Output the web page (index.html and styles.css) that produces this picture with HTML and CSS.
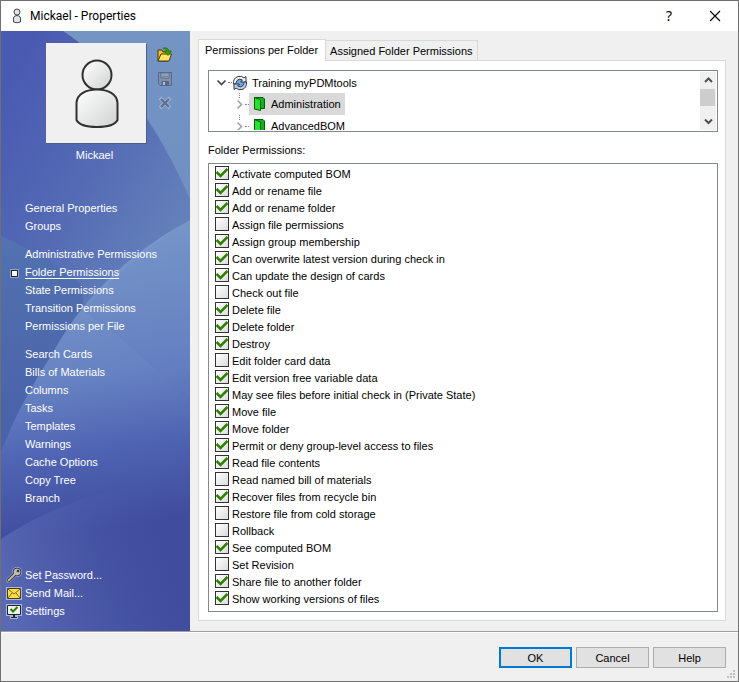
FILE: index.html
```html
<!DOCTYPE html>
<html lang="en">
<head>
<meta charset="utf-8">
<title>Mickael - Properties</title>
<link rel="stylesheet" href="styles.css">
</head>
<body>
<div class="window">
  <header class="titlebar">
    <svg class="title-icon" width="16" height="16" viewBox="0 0 16 16"><g fill="#e4e4e4" stroke="#444" stroke-width="1"><circle cx="8" cy="4" r="3"/><path d="M4.500 14V10Q5 7.500 8 7.500T11.500 10V14Q8 15.500 4.500 14Z"/></g></svg>
    <h1 class="title">Mickael - Properties</h1>
    <button class="caption-button" type="button" aria-label="Context help">?</button>
    <button class="caption-button" type="button" aria-label="Close"><svg width="12" height="12" viewBox="0 0 12 12"><path d="M1 1L11 11M11 1L1 11" stroke="#000" stroke-width="1.100"/></svg></button>
  </header>
  <div class="main">
    <aside class="sidebar">
      <svg class="sidebar-art" viewBox="0 0 189 600" preserveAspectRatio="none" aria-hidden="true">
        <defs>
          <linearGradient id="sky" x1="0" y1="0" x2="0" y2="1"><stop offset="0" stop-color="#7494c4"/><stop offset="1" stop-color="#6686be"/></linearGradient>
          <linearGradient id="upper" gradientUnits="userSpaceOnUse" x1="0" y1="60" x2="190" y2="170"><stop offset="0" stop-color="#4a5ab2"/><stop offset=".5" stop-color="#536ab4"/><stop offset="1" stop-color="#6480ba"/></linearGradient>
          <linearGradient id="shade" x1="0" y1="0" x2="0" y2="1"><stop offset="0" stop-color="#5272b0"/><stop offset="1" stop-color="#4860a8"/></linearGradient>
          <linearGradient id="dome" gradientUnits="userSpaceOnUse" x1="110" y1="189" x2="160" y2="490"><stop offset="0" stop-color="#7c9ecc"/><stop offset=".5" stop-color="#6682c2"/><stop offset=".75" stop-color="#4e62b2"/><stop offset="1" stop-color="#404c9e"/></linearGradient>
          <linearGradient id="foot" gradientUnits="userSpaceOnUse" x1="0" y1="560" x2="170" y2="500"><stop offset="0" stop-color="#5a69b4"/><stop offset="1" stop-color="#4656a6" stop-opacity="0"/></linearGradient>
        </defs>
        <rect width="189" height="600" fill="url(#sky)"/>
        <path d="M0 0H62Q136 48 189 168V400H0Z" fill="url(#upper)"/>
        <path d="M0 205Q45 225 82 255V430H0Z" fill="url(#shade)"/>
        <path d="M189 189Q95 240 50 325Q20 370 0 420V600H189Z" fill="url(#dome)"/>
        <path d="M82 280Q135 315 189 374V189Q130 225 82 280Z" fill="#6070bc" fill-opacity=".15"/>
        <path d="M0 508Q70 460 189 443V600H0Z" fill="url(#foot)"/>
      </svg>
      <div class="profile">
        <figure class="card">
          <div class="portrait">
            <svg width="100" height="100" viewBox="0 0 100 100"><defs><linearGradient id="body" x1="0" y1="0" x2="1" y2="1"><stop offset="0" stop-color="#fff"/><stop offset="1" stop-color="#d0d2d1"/></linearGradient></defs><g fill="url(#body)" stroke="#303030" stroke-width="2"><circle cx="51" cy="32" r="14.500"/><path d="M30.500 77V60C31 51 40 46.500 51 46.500S71 51 71.500 60V77C69 82 60 84 51 84S33 82 30.500 77Z"/></g></svg>
          </div>
          <figcaption>Mickael</figcaption>
        </figure>
        <div class="profile-tools">
          <button type="button" class="tool" aria-label="Open picture"><svg width="16" height="16" viewBox="0 0 16 16"><path d="M1 14V3H5L6 5H11V14Z" fill="#f4c51c" stroke="#49390c"/><path d="M1 14L4 7H14.500L12 14Z" fill="#ffe666" stroke="#49390c"/><path d="M6 1Q11 0 12 4H14.500L11 8.500L7.500 4H10Q9 2 6 1Z" fill="#36a000" stroke="#1c6300" stroke-width=".6"/></svg></button>
          <button type="button" class="tool" aria-label="Save picture" disabled><svg width="16" height="16" viewBox="0 0 16 16"><path d="M1.500 1.500H14.500V14.500H3L1.500 13Z" fill="#8090aa" stroke="#56688c"/><path d="M4 2H12V7H4Z" fill="#a8b7ce" stroke="#56688c"/><path d="M5 4H11M5 5.500H11" stroke="#61728f" stroke-width=".7"/><path d="M4.500 10H12V14H4.500Z" fill="#566886"/><path d="M6 11H8V14H6Z" fill="#b0bfd5"/></svg></button>
          <button type="button" class="tool" aria-label="Remove picture" disabled><svg width="16" height="16" viewBox="0 0 16 16"><path d="M3 3L13 13M13 3L3 13" stroke="#9cb2d4" stroke-width="4"/><path d="M4 4L12 12M12 4L4 12" stroke="#5f7088" stroke-width="2.400"/></svg></button>
        </div>
      </div>
      <nav class="nav">
        <div class="nav-group"><a href="#">General Properties</a><a href="#">Groups</a></div>
        <div class="nav-group"><a href="#">Administrative Permissions</a><a href="#" class="current" aria-current="page">Folder Permissions</a><a href="#">State Permissions</a><a href="#">Transition Permissions</a><a href="#">Permissions per File</a></div>
        <div class="nav-group"><a href="#">Search Cards</a><a href="#">Bills of Materials</a><a href="#">Columns</a><a href="#">Tasks</a><a href="#">Templates</a><a href="#">Warnings</a><a href="#">Cache Options</a><a href="#">Copy Tree</a><a href="#">Branch</a></div>
      </nav>
      <div class="actions">
        <a href="#"><svg width="16" height="16" viewBox="0 0 16 16"><path d="M1 15L9 7" stroke="#aebbe8" stroke-width="5"/><circle cx="11" cy="5" r="5" fill="#aebbe8"/><path d="M1.500 14.500L9 7" stroke="#333" stroke-width="4"/><circle cx="11" cy="5" r="4" fill="#bbb" stroke="#333"/><path d="M2 14L9 7" stroke="#bbb" stroke-width="2"/><circle cx="12" cy="4" r="1.300" fill="#333"/></svg><span>Set <u>P</u>assword...</span></a>
        <a href="#"><svg width="16" height="16" viewBox="0 0 16 16"><rect y="2" width="16" height="13" fill="#a9b7e2"/><path d="M1.500 3.500H14.500V13.500H1.500Z" fill="#ffdc49" stroke="#4c3c12"/><path d="M2 4L8 9L14 4M2 13L6 8M14 13L10 8" fill="none" stroke="#806418"/></svg><span>Send Mail...</span></a>
        <a href="#"><svg width="16" height="16" viewBox="0 0 16 16"><path d="M0 1H16V13H12V16H4V13H0Z" fill="#a9b7e2"/><path d="M1.500 2.500H14.500V11.500H1.500Z" fill="#eee" stroke="#222"/><path d="M7 12H9V14H11V15H5V14H7Z" fill="#222"/><path d="M4.500 6L7 8.500L11.500 4" fill="none" stroke="#258000" stroke-width="2"/></svg><span>Settings</span></a>
      </div>
    </aside>
    <main class="content">
      <div class="tabs" role="tablist">
        <button type="button" class="tab selected" role="tab" aria-selected="true">Permissions per Folder</button>
        <button type="button" class="tab" role="tab" aria-selected="false">Assigned Folder Permissions</button>
      </div>
      <section class="panel" role="tabpanel">
        <div class="tree">
          <div class="tree-view" role="tree">
            <div class="node root" role="treeitem" aria-expanded="true"><svg width="11" height="8" viewBox="0 0 11 8"><path d="M1.500 1.500L5.500 5.500L9.500 1.500" fill="none" stroke="#444" stroke-width="1.700"/></svg><i class="dots"></i><svg width="16" height="16" viewBox="0 0 16 16"><circle cx="8" cy="8" r="5.500" fill="#6ea8e4"/><path d="M1.500 9Q1 3 6 1.500Q10 .5 12 3L14 1.500V7H8.500L10.500 5Q7 3 5 5.500Q4 7 4 9Z" fill="#f4f8fc" stroke="#303941"/><path d="M14.500 7Q15 13 10 14.500Q6 15.500 4 13L2 14.500V9H7.500L5.500 11Q9 13 11 10.500Q12 9 12 7Z" fill="#b8d2ea" stroke="#303941"/></svg><span class="node-label">Training myPDMtools</span></div>
            <div class="node child" role="treeitem" aria-selected="true"><i class="branch"></i><svg width="7" height="11" viewBox="0 0 7 11"><path d="M1.500 1.500L5.500 5.500L1.500 9.500" fill="none" stroke="#a4a4a4" stroke-width="1.700"/></svg><i class="dots"></i><span class="node-pick selected"><svg width="16" height="16" viewBox="0 0 16 16"><path d="M3.500 1.500H12L13.500 3V12.500H10L3.500 13Z" fill="#13b01c" stroke="#075e0a"/><path d="M3.500 1.500L9.500 4V14.500L3.500 13Z" fill="#25e331" stroke="#075e0a"/></svg><span class="node-label">Administration</span></span></div>
            <div class="node child" role="treeitem"><i class="branch"></i><svg width="7" height="11" viewBox="0 0 7 11"><path d="M1.500 1.500L5.500 5.500L1.500 9.500" fill="none" stroke="#a4a4a4" stroke-width="1.700"/></svg><i class="dots"></i><span class="node-pick"><svg width="16" height="16" viewBox="0 0 16 16"><path d="M3.500 1.500H12L13.500 3V12.500H10L3.500 13Z" fill="#13b01c" stroke="#075e0a"/><path d="M3.500 1.500L9.500 4V14.500L3.500 13Z" fill="#25e331" stroke="#075e0a"/></svg><span class="node-label">AdvancedBOM</span></span></div>
          </div>
          <div class="scrollbar">
            <button type="button" aria-label="Scroll up"><svg width="9" height="7" viewBox="0 0 9 7"><path d="M1 5L4.500 1.500L8 5" fill="none" stroke="#505050" stroke-width="2"/></svg></button>
            <div class="thumb"></div>
            <button type="button" aria-label="Scroll down"><svg width="9" height="7" viewBox="0 0 9 7"><path d="M1 1.500L4.500 5L8 1.500" fill="none" stroke="#505050" stroke-width="2"/></svg></button>
          </div>
        </div>
        <h2 class="list-title">Folder Permissions:</h2>
        <div class="checklist">
          <label><input type="checkbox" checked>Activate computed BOM</label>
          <label><input type="checkbox" checked>Add or rename file</label>
          <label><input type="checkbox" checked>Add or rename folder</label>
          <label><input type="checkbox">Assign file permissions</label>
          <label><input type="checkbox" checked>Assign group membership</label>
          <label><input type="checkbox" checked>Can overwrite latest version during check in</label>
          <label><input type="checkbox" checked>Can update the design of cards</label>
          <label><input type="checkbox">Check out file</label>
          <label><input type="checkbox" checked>Delete file</label>
          <label><input type="checkbox" checked>Delete folder</label>
          <label><input type="checkbox" checked>Destroy</label>
          <label><input type="checkbox">Edit folder card data</label>
          <label><input type="checkbox" checked>Edit version free variable data</label>
          <label><input type="checkbox" checked>May see files before initial check in (Private State)</label>
          <label><input type="checkbox" checked>Move file</label>
          <label><input type="checkbox" checked>Move folder</label>
          <label><input type="checkbox" checked>Permit or deny group-level access to files</label>
          <label><input type="checkbox" checked>Read file contents</label>
          <label><input type="checkbox">Read named bill of materials</label>
          <label><input type="checkbox" checked>Recover files from recycle bin</label>
          <label><input type="checkbox">Restore file from cold storage</label>
          <label><input type="checkbox">Rollback</label>
          <label><input type="checkbox" checked>See computed BOM</label>
          <label><input type="checkbox">Set Revision</label>
          <label><input type="checkbox" checked>Share file to another folder</label>
          <label><input type="checkbox" checked>Show working versions of files</label>
        </div>
      </section>
    </main>
  </div>
  <footer class="footer">
    <button type="button" class="button default">OK</button>
    <button type="button" class="button">Cancel</button>
    <button type="button" class="button">Help</button>
    <svg class="grip" width="8" height="8" viewBox="0 0 8 8" aria-hidden="true"><path d="M6 0h2v2H6zM3 3h2v2H3zM6 3h2v2H6zM0 6h2v2H0zM3 6h2v2H3zM6 6h2v2H6z" fill="#bfbfbf"/></svg>
  </footer>
</div>
</body>
</html>
```
FILE: styles.css
```css
* { box-sizing: border-box; }
body {
  margin: 0;
  color: #000;
  font: 11px/18px "Liberation Sans", Arial, sans-serif;
}
button { margin: 0; padding: 0; border: 0; background: none; color: inherit; font: inherit; }
svg { display: block; flex: none; }
a { color: inherit; text-decoration: none; }

.window {
  display: flex;
  flex-direction: column;
  min-height: 100vh;
  border: 1px solid #707070;
  background: #f0f0f0;
}
.titlebar { display: flex; align-items: center; height: 30px; padding-left: 8px; background: #fff; }
.title { flex: 1; margin: 0 0 0 5px; font: 12px/18px Roboto, sans-serif; }
.caption-button { display: grid; place-items: center; width: 46px; height: 30px; font: 14px/18px "Noto Sans", sans-serif; }

.main { display: flex; flex: 1; }
.sidebar {
  position: relative;
  isolation: isolate;
  display: flex;
  flex-direction: column;
  flex: none;
  width: 189px;
  color: #fff;
}
.sidebar-art { position: absolute; z-index: -1; inset: 0; width: 100%; height: 100%; }
.profile { display: flex; gap: 11px; padding: 12px 0 0 45px; }
.card { margin: 0; text-align: center; }
.portrait { width: 100px; height: 100px; background: #f0f0f0; box-shadow: 1px 1px #4a5e86; }
.card figcaption { margin: 3px 3px 0 0; }
.profile-tools { display: flex; flex-direction: column; gap: 8px; padding-top: 4px; }
.tool { width: 16px; height: 16px; }
.nav { display: flex; flex-direction: column; gap: 10px; padding: 35px 0 0 24px; }
.nav-group { display: flex; flex-direction: column; align-items: flex-start; }
.nav a { height: 18px; }
.nav .current { position: relative; text-decoration: underline; text-underline-offset: 2px; }
.nav .current::before {
  content: "";
  position: absolute;
  left: -14px;
  top: 7px;
  width: 5px;
  height: 5px;
  border: 1px solid #222;
  outline: 1px solid #8fa4d4;
  background: #fff;
}
.actions { display: flex; flex-direction: column; margin-top: auto; padding: 0 0 11px 5px; }
.actions a { display: flex; align-items: center; gap: 3px; height: 18px; }
.actions u { text-underline-offset: 2px; }

.content { display: flex; flex: 1; flex-direction: column; min-width: 0; padding: 8px 12px 10px 8px; }
.tabs { display: flex; align-items: flex-end; }
.tab {
  height: 20px;
  padding: 0 4px;
  border: 1px solid #d9d9d9;
  border-left: 0;
  border-bottom: 0;
  white-space: nowrap;
}
.tab.selected {
  height: 22px;
  margin-bottom: -1px;
  padding: 0 7px 2px 6px;
  border-left: 1px solid #d9d9d9;
  background: #fff;
  z-index: 1;
}
.panel { display: flex; flex: 1; flex-direction: column; padding: 9px 7px 8px 9px; border: 1px solid #d9d9d9; background: #fff; }
.tree { display: flex; height: 62px; padding: 1px; border: 1px solid #828790; }
.tree-view { flex: 1; overflow: hidden; }
.node { position: relative; display: flex; align-items: center; height: 22px; }
.root { height: 21px; padding-left: 6px; }
.child { padding-left: 26px; }
.root .dots { width: 4px; margin: 0 0 0 1px; }
.dots { width: 4px; margin-left: 2px; border-top: 1px dotted #888; }
.branch { position: absolute; left: 29px; top: 0; height: 5px; border-left: 1px dotted #888; }
.node-label { margin-left: 4px; }
.node-pick { display: flex; align-items: center; height: 22px; padding: 0 4px 0 2px; }
.node-pick.selected { background: #d9d9d9; }
.scrollbar { display: flex; flex-direction: column; width: 16px; background: #f0f0f0; }
.scrollbar button { display: grid; place-items: center; height: 17px; }
.thumb { height: 17px; margin-right: 1px; background: #cdcdcd; }
.scrollbar button:last-child { margin-top: auto; }
.list-title { margin: 9px 0 4px; font: inherit; }
.checklist { display: flex; flex: 1; flex-direction: column; padding: 1px 6px; border: 1px solid #828790; }
.checklist label { display: flex; align-items: center; gap: 3px; height: 17px; }
.checklist input {
  appearance: none;
  flex: none;
  width: 14px;
  height: 14px;
  margin: 0 0 2px;
  border: 1px solid #333;
  background: linear-gradient(135deg, #fff, #dcdcdc);
}
.checklist input:checked {
  background: url("data:image/svg+xml,%3Csvg xmlns='http://www.w3.org/2000/svg' viewBox='0 0 12 12'%3E%3Cpath d='M0.500 5L4.500 9L11.500 2' fill='none' stroke='%23308000' stroke-width='2.600'/%3E%3C/svg%3E"), linear-gradient(135deg, #fff, #dcdcdc);
}

.footer {
  position: relative;
  display: flex;
  justify-content: flex-end;
  gap: 4px;
  padding: 15px 12px 13px;
  border-top: 1px solid #a0a0a0;
  box-shadow: inset 0 1px #fff;
}
.button { width: 73px; height: 21px; border: 1px solid #adadad; background: #e1e1e1; }
.button.default { border: 2px solid #0078d7; }
.grip { position: absolute; right: 3px; bottom: 3px; }
```
